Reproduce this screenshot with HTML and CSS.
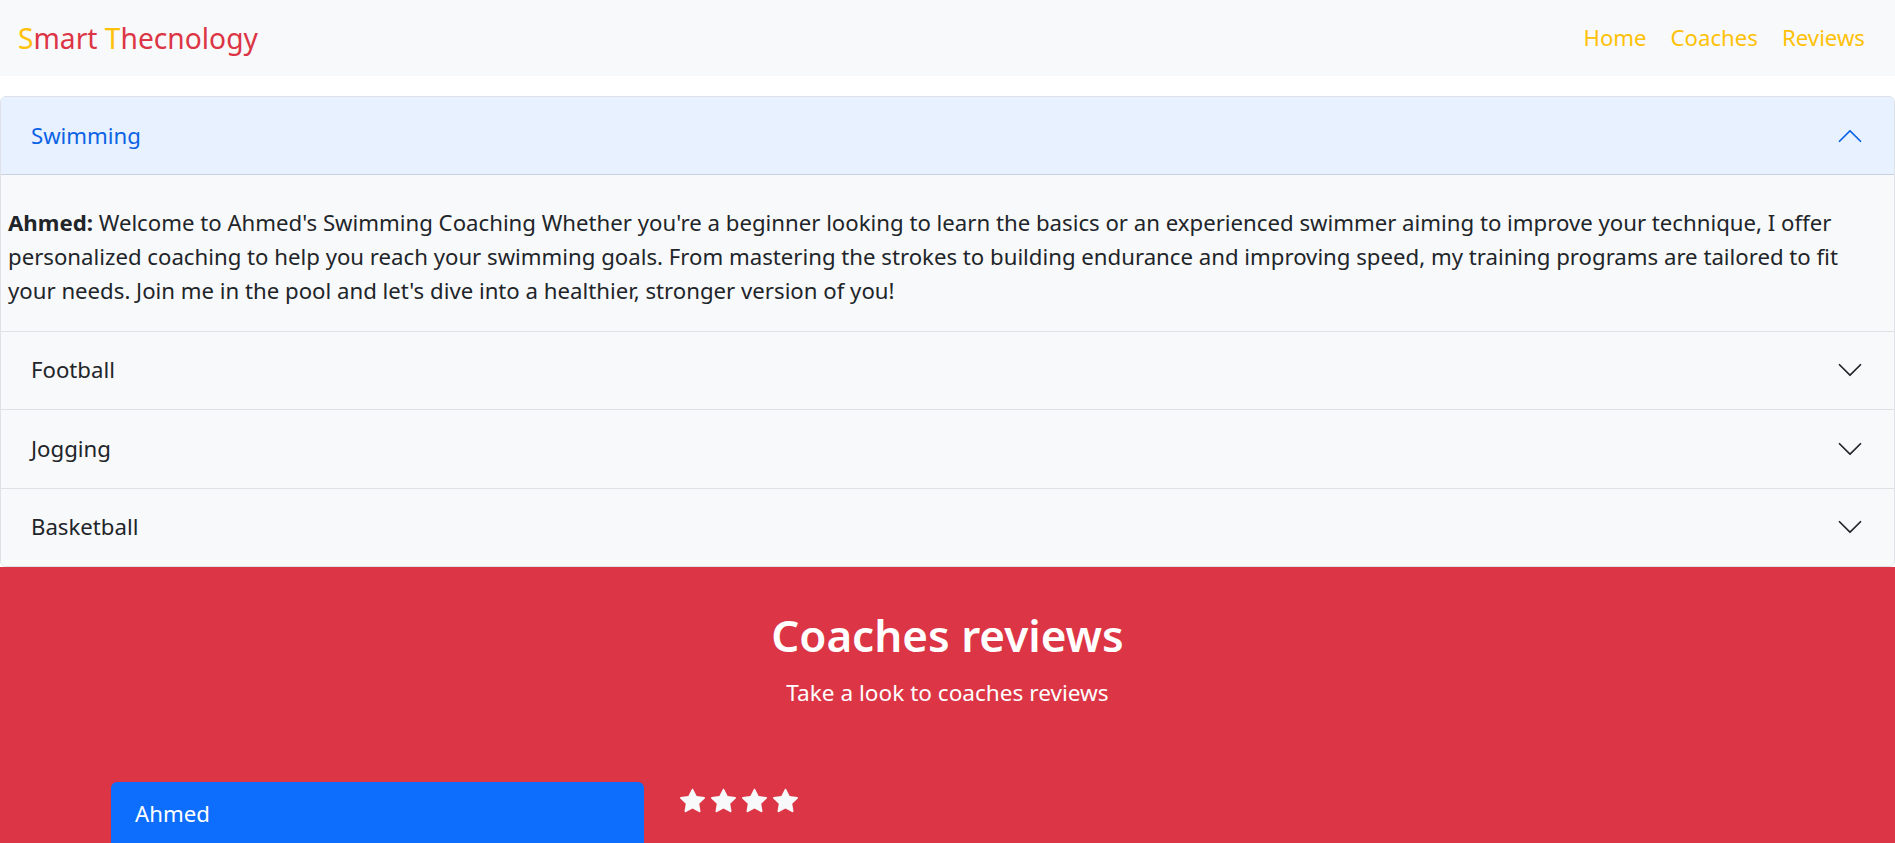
FILE: index.html
```html
<!DOCTYPE html>
<html lang="en">
<head>
<meta charset="utf-8">
<title>Smart Thecnology</title>
<link rel="stylesheet" href="styles.css">
</head>
<body>
<nav class="navbar">
  <a class="brand" href="#"><span class="brand-accent">S</span>mart <span class="brand-accent">T</span>hecnology</a>
  <ul class="nav-links">
    <li><a href="#">Home</a></li>
    <li><a href="#">Coaches</a></li>
    <li><a href="#">Reviews</a></li>
  </ul>
</nav>

<div class="accordion">
  <div class="acc-item">
    <button class="acc-btn open" type="button">
      <span>Swimming</span>
      <svg class="chev" viewBox="0 0 16 16"><path d="M1.646 4.646a.5.5 0 0 1 .708 0L8 10.293l5.646-5.647a.5.5 0 0 1 .708.708l-6 6a.5.5 0 0 1-.708 0l-6-6a.5.5 0 0 1 0-.708z"/></svg>
    </button>
    <div class="acc-body">
      <p><strong>Ahmed:</strong> Welcome to Ahmed's Swimming Coaching Whether you're a beginner looking to learn the basics or an experienced swimmer aiming to improve your technique, I offer personalized coaching to help you reach your swimming goals. From mastering the strokes to building endurance and improving speed, my training programs are tailored to fit your needs. Join me in the pool and let's dive into a healthier, stronger version of you!</p>
    </div>
  </div>
  <div class="acc-item">
    <button class="acc-btn" type="button">
      <span>Football</span>
      <svg class="chev" viewBox="0 0 16 16"><path d="M1.646 4.646a.5.5 0 0 1 .708 0L8 10.293l5.646-5.647a.5.5 0 0 1 .708.708l-6 6a.5.5 0 0 1-.708 0l-6-6a.5.5 0 0 1 0-.708z"/></svg>
    </button>
  </div>
  <div class="acc-item">
    <button class="acc-btn" type="button">
      <span>Jogging</span>
      <svg class="chev" viewBox="0 0 16 16"><path d="M1.646 4.646a.5.5 0 0 1 .708 0L8 10.293l5.646-5.647a.5.5 0 0 1 .708.708l-6 6a.5.5 0 0 1-.708 0l-6-6a.5.5 0 0 1 0-.708z"/></svg>
    </button>
  </div>
  <div class="acc-item">
    <button class="acc-btn" type="button">
      <span>Basketball</span>
      <svg class="chev" viewBox="0 0 16 16"><path d="M1.646 4.646a.5.5 0 0 1 .708 0L8 10.293l5.646-5.647a.5.5 0 0 1 .708.708l-6 6a.5.5 0 0 1-.708 0l-6-6a.5.5 0 0 1 0-.708z"/></svg>
    </button>
  </div>
</div>

<section class="reviews">
  <h2 class="reviews-title">Coaches reviews</h2>
  <p class="reviews-sub">Take a look to coaches reviews</p>
  <div class="review-row">
    <div class="coach-card">
      <div class="coach-name">Ahmed</div>
    </div>
    <div class="stars">
      <svg viewBox="0 0 16 16"><path d="M3.612 15.443c-.386.198-.824-.149-.746-.592l.83-4.73L.173 6.765c-.329-.314-.158-.888.283-.95l4.898-.696L7.538.792c.197-.39.73-.39.927 0l2.184 4.327 4.898.696c.441.062.612.636.282.95l-3.522 3.356.83 4.73c.078.443-.36.79-.746.592L8 13.187l-4.389 2.256z"/></svg>
      <svg viewBox="0 0 16 16"><path d="M3.612 15.443c-.386.198-.824-.149-.746-.592l.83-4.73L.173 6.765c-.329-.314-.158-.888.283-.95l4.898-.696L7.538.792c.197-.39.73-.39.927 0l2.184 4.327 4.898.696c.441.062.612.636.282.95l-3.522 3.356.83 4.73c.078.443-.36.79-.746.592L8 13.187l-4.389 2.256z"/></svg>
      <svg viewBox="0 0 16 16"><path d="M3.612 15.443c-.386.198-.824-.149-.746-.592l.83-4.73L.173 6.765c-.329-.314-.158-.888.283-.95l4.898-.696L7.538.792c.197-.39.73-.39.927 0l2.184 4.327 4.898.696c.441.062.612.636.282.95l-3.522 3.356.83 4.73c.078.443-.36.79-.746.592L8 13.187l-4.389 2.256z"/></svg>
      <svg viewBox="0 0 16 16"><path d="M3.612 15.443c-.386.198-.824-.149-.746-.592l.83-4.73L.173 6.765c-.329-.314-.158-.888.283-.95l4.898-.696L7.538.792c.197-.39.73-.39.927 0l2.184 4.327 4.898.696c.441.062.612.636.282.95l-3.522 3.356.83 4.73c.078.443-.36.79-.746.592L8 13.187l-4.389 2.256z"/></svg>
    </div>
  </div>
</section>
</body>
</html>
```

FILE: styles.css
```css
* { box-sizing: border-box; }

html, body {
  margin: 0;
  padding: 0;
}

body {
  font-family: "Segoe UI", "Noto Sans", "Open Sans", sans-serif;
  font-size: 22.2px;
  line-height: 34px;
  color: #212529;
  background: #ffffff;
}

/* Navbar */
.navbar {
  display: flex;
  align-items: center;
  justify-content: space-between;
  height: 76px;
  padding: 0 18px 0 18px;
  background: #f8f9fa;
}

.brand {
  font-size: 28.2px;
  line-height: 40px;
  color: #dc3545;
  text-decoration: none;
}

.brand-accent { color: #ffc107; }

.nav-links {
  display: flex;
  list-style: none;
  margin: 0;
  padding: 0;
}

.nav-links a {
  display: block;
  padding: 0 12px;
  color: #ffc107;
  text-decoration: none;
  line-height: 34px;
}

/* Accordion */
.accordion {
  margin-top: 20px;
  border: 1px solid #dee2e6;
  border-radius: 6px;
  overflow: hidden;
  background: #f8f9fa;
}

.acc-item + .acc-item {
  border-top: 1px solid #dee2e6;
}

.acc-btn {
  display: flex;
  align-items: center;
  justify-content: space-between;
  width: 100%;
  height: 77.5px;
  padding: 0 30px 0 30px;
  border: 0;
  background: #f8f9fa;
  font: inherit;
  color: #212529;
  text-align: left;
  cursor: pointer;
}

.acc-btn.open {
  background: #e7f1ff;
  color: #0c63e4;
  box-shadow: inset 0 -1px 0 rgba(0, 0, 0, 0.125);
}

.chev {
  width: 28px;
  height: 28px;
  fill: #212529;
}

.acc-btn.open .chev {
  fill: #0c63e4;
  transform: rotate(180deg);
}

.acc-body {
  padding: 31px 40px 23px 7px;
  background: #f8f9fa;
}

.acc-body p {
  margin: 0;
}

/* Reviews */
.reviews {
  background: #dc3545;
  color: #ffffff;
  padding: 42px 0 40px;
  text-align: center;
}

.reviews-title {
  margin: 0;
  font-size: 44px;
  line-height: 53px;
  font-weight: 600;
}

.reviews-sub {
  margin: 14px 0 0;
  font-size: 22.6px;
}

.review-row {
  display: flex;
  align-items: flex-start;
  gap: 36px;
  margin-top: 72px;
  padding-left: 111px;
  text-align: left;
}

.coach-card {
  width: 533px;
  min-height: 120px;
  background: #0d6efd;
  border-radius: 6px;
}

.coach-name {
  padding: 15px 24px;
}

.stars {
  display: flex;
  gap: 6px;
  margin-top: 6px;
}

.stars svg {
  width: 25px;
  height: 25px;
  fill: #f8f9fa;
}
```
